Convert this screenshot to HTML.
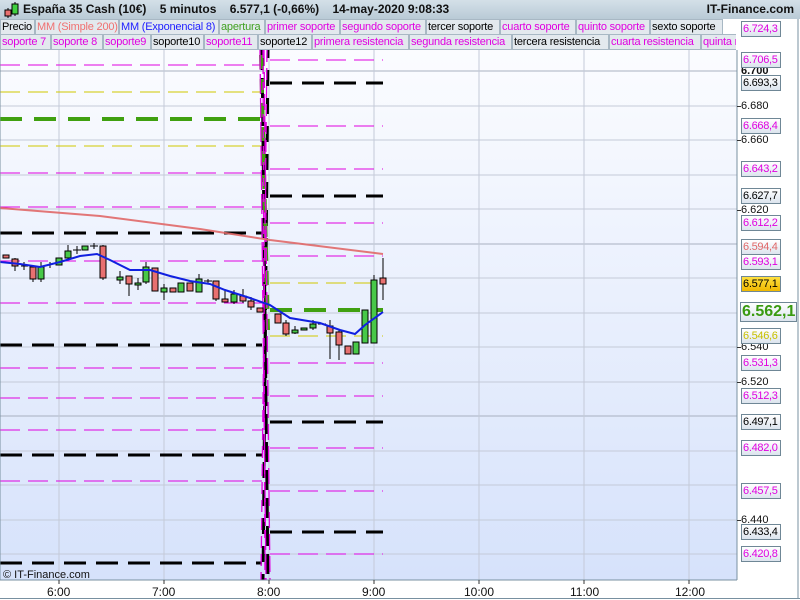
<!DOCTYPE html>
<html><head><meta charset="utf-8"><style>
*{margin:0;padding:0;box-sizing:border-box}
body{width:800px;height:600px;overflow:hidden;background:#fff;font-family:"Liberation Sans",sans-serif;position:relative}
#hdr{position:absolute;left:0;top:0;width:800px;height:19px;background:linear-gradient(#d4e0e8,#b9cad6);font-size:12px;font-weight:bold;color:#111;line-height:19px}
.row{position:absolute;left:0;height:16px;width:736px;background:#fff;overflow:hidden}
.t{position:absolute;top:0;height:16px;font-size:11px;letter-spacing:-0.2px;line-height:15px;background:#e3e9ee;border:1px solid #a8b8c4;padding-left:1px;white-space:nowrap;overflow:hidden}
.m{color:#e000e0}
.lb{position:absolute;left:741px;width:40px;height:16px;font-size:11px;letter-spacing:-0.3px;line-height:14px;border:1px solid #6f8796;background:linear-gradient(#fff,#dce4ee);padding-left:1px;white-space:nowrap;overflow:hidden}
.ax{position:absolute;left:741px;font-size:11px;line-height:12px;color:#111}
.tk{position:absolute;left:737px;width:4px;height:1px;background:#333}
.bt{position:absolute;top:585px;font-size:12px;color:#111}
</style></head><body>
<div id="hdr">
<svg width="20" height="19" style="position:absolute;left:2px;top:0"><line x1="6" y1="8" x2="6" y2="18" stroke="#000"/><rect x="3" y="10" width="6" height="6" fill="#e87070" stroke="#000"/><line x1="13" y1="2" x2="13" y2="16" stroke="#000"/><rect x="10" y="4" width="6" height="10" fill="#40d040" stroke="#000"/></svg>
<span style="position:absolute;left:23px">España 35 Cash (10€)&nbsp;&nbsp;&nbsp; 5 minutos&nbsp;&nbsp;&nbsp; 6.577,1 (-0,66%)&nbsp;&nbsp;&nbsp; 14-may-2020 9:08:33</span>
<span style="position:absolute;right:6px">IT-Finance.com</span>
</div>
<div class="row" style="top:19px">
<div class="t" style="left:0;width:35px">Precio</div>
<div class="t" style="left:35px;width:84px;color:#f07070">MM (Simple 200)</div>
<div class="t" style="left:119px;width:100px;color:#2020ff">MM (Exponencial 8)</div>
<div class="t" style="left:219px;width:46px;color:#40a020">apertura</div>
<div class="t m" style="left:265px;width:75px">primer soporte</div>
<div class="t m" style="left:340px;width:86px">segundo soporte</div>
<div class="t" style="left:426px;width:74px">tercer soporte</div>
<div class="t m" style="left:500px;width:76px">cuarto soporte</div>
<div class="t m" style="left:576px;width:74px">quinto soporte</div>
<div class="t" style="left:650px;width:73px">sexto soporte</div>
</div>
<div class="row" style="top:34px">
<div class="t m" style="left:0;width:51px">soporte 7</div>
<div class="t m" style="left:51px;width:52px">soporte 8</div>
<div class="t m" style="left:103px;width:48px">soporte9</div>
<div class="t" style="left:151px;width:53px">soporte10</div>
<div class="t m" style="left:204px;width:54px">soporte11</div>
<div class="t" style="left:258px;width:54px">soporte12</div>
<div class="t m" style="left:312px;width:97px">primera resistencia</div>
<div class="t m" style="left:409px;width:103px">segunda resistencia</div>
<div class="t" style="left:512px;width:97px">tercera resistencia</div>
<div class="t m" style="left:609px;width:92px">cuarta resistencia</div>
<div class="t m" style="left:701px;width:40px">quinta resistencia</div>
</div>
<svg width="800" height="600" style="position:absolute;left:0;top:0" >
<defs><linearGradient id="bg" x1="0" y1="0" x2="0" y2="1"><stop offset="0" stop-color="#fbfcff"/><stop offset="1" stop-color="#d6e2fb"/></linearGradient></defs>
<rect x="0" y="50" width="737" height="530" fill="url(#bg)"/>
<g stroke="#c4cad8" stroke-width="1">
<line x1="0" y1="71" x2="737" y2="71" stroke="#a8b0c0"/><line x1="0" y1="106" x2="737" y2="106"/><line x1="0" y1="140" x2="737" y2="140"/><line x1="0" y1="175" x2="737" y2="175"/><line x1="0" y1="209" x2="737" y2="209"/><line x1="0" y1="244" x2="737" y2="244" stroke="#a8b0c0"/><line x1="0" y1="278" x2="737" y2="278"/><line x1="0" y1="313" x2="737" y2="313"/><line x1="0" y1="347" x2="737" y2="347"/><line x1="0" y1="382" x2="737" y2="382"/><line x1="0" y1="416" x2="737" y2="416" stroke="#a8b0c0"/><line x1="0" y1="451" x2="737" y2="451"/><line x1="0" y1="485" x2="737" y2="485"/><line x1="0" y1="520" x2="737" y2="520"/><line x1="0" y1="554" x2="737" y2="554"/>
<line x1="59" y1="50" x2="59" y2="580"/><line x1="164" y1="50" x2="164" y2="580"/><line x1="269" y1="50" x2="269" y2="580"/><line x1="374" y1="50" x2="374" y2="580"/><line x1="479" y1="50" x2="479" y2="580"/><line x1="584" y1="50" x2="584" y2="580"/><line x1="689" y1="50" x2="689" y2="580"/>
</g>
<g fill="none" stroke-dasharray="20 8">
<g stroke="#e000e0" stroke-width="1"><line x1="0" y1="65" x2="262" y2="65"/><line x1="0" y1="173" x2="262" y2="173"/><line x1="0" y1="207" x2="262" y2="207"/><line x1="0" y1="261" x2="262" y2="261"/><line x1="0" y1="303" x2="262" y2="303"/><line x1="0" y1="368" x2="262" y2="368"/><line x1="0" y1="398" x2="262" y2="398"/><line x1="0" y1="430" x2="262" y2="430"/><line x1="0" y1="481" x2="262" y2="481"/></g>
<g stroke="#d0c800" stroke-width="1"><line x1="0" y1="92" x2="262" y2="92"/><line x1="0" y1="146" x2="262" y2="146"/></g>
</g>
<g fill="none" stroke-dasharray="22 10">
<line x1="0" y1="119" x2="262" y2="119" stroke="#40a010" stroke-width="4" stroke-dasharray="22 12"/>
<g stroke="#000" stroke-width="3"><line x1="0" y1="233" x2="262" y2="233"/><line x1="0" y1="345" x2="262" y2="345"/><line x1="0" y1="455" x2="262" y2="455"/><line x1="0" y1="563" x2="262" y2="563"/></g>
</g>
<g fill="none" stroke-dasharray="20 8">
<g stroke="#e000e0" stroke-width="1"><line x1="270" y1="60" x2="383" y2="60"/><line x1="270" y1="126" x2="383" y2="126"/><line x1="270" y1="169" x2="383" y2="169"/><line x1="270" y1="223" x2="383" y2="223"/><line x1="270" y1="256" x2="383" y2="256"/><line x1="270" y1="363" x2="383" y2="363"/><line x1="270" y1="396" x2="383" y2="396"/><line x1="270" y1="448" x2="383" y2="448"/><line x1="270" y1="491" x2="383" y2="491"/><line x1="270" y1="554" x2="383" y2="554"/></g>
<g stroke="#d0c800" stroke-width="1"><line x1="270" y1="283" x2="383" y2="283"/><line x1="270" y1="336" x2="383" y2="336"/></g>
</g>
<g fill="none" stroke-dasharray="22 10">
<line x1="270" y1="310" x2="383" y2="310" stroke="#40a010" stroke-width="4" stroke-dasharray="22 12"/>
<g stroke="#000" stroke-width="3"><line x1="270" y1="83" x2="383" y2="83"/><line x1="270" y1="196" x2="383" y2="196"/><line x1="270" y1="422" x2="383" y2="422"/><line x1="270" y1="532" x2="383" y2="532"/></g>
</g>
<line x1="262" y1="50" x2="268" y2="580" stroke="#000" stroke-width="3" stroke-dasharray="20 8"/>
<line x1="268" y1="50" x2="263" y2="580" stroke="#000" stroke-width="3" stroke-dasharray="16 12" stroke-dashoffset="8"/>
<line x1="261" y1="55" x2="268" y2="330" stroke="#40a010" stroke-width="4" stroke-dasharray="14 10"/>
<g stroke="#e000e0" stroke-width="1.3" fill="none"><line x1="260" y1="50" x2="266" y2="580" stroke-dasharray="20 4"/><line x1="264" y1="50" x2="270" y2="580" stroke-dasharray="16 6"/><line x1="267" y1="50" x2="261" y2="580" stroke-dasharray="12 6"/><line x1="263" y1="50" x2="265" y2="580" stroke-dasharray="8 8"/></g>
<polyline points="0,208 100,216 200,229 270,240 383,254" fill="none" stroke="#e06868" stroke-width="2" opacity="0.9"/>
<g stroke="#000" stroke-width="1">
<line x1="15" y1="258" x2="15" y2="271"/><line x1="24" y1="262" x2="24" y2="270"/><line x1="33" y1="265" x2="33" y2="282"/><line x1="41" y1="262" x2="41" y2="282"/><line x1="50" y1="262" x2="50" y2="268"/><line x1="68" y1="245" x2="68" y2="258"/><line x1="103" y1="245" x2="103" y2="280"/><line x1="120" y1="271" x2="120" y2="284"/><line x1="129" y1="276" x2="129" y2="296"/><line x1="138" y1="278" x2="138" y2="290"/><line x1="146" y1="262" x2="146" y2="284"/><line x1="164" y1="284" x2="164" y2="300"/><line x1="199" y1="274" x2="199" y2="292"/><line x1="208" y1="279" x2="208" y2="283"/><line x1="216" y1="281" x2="216" y2="301"/><line x1="225" y1="289" x2="225" y2="302"/><line x1="234" y1="290" x2="234" y2="304"/><line x1="243" y1="289" x2="243" y2="303"/><line x1="251" y1="297" x2="251" y2="310"/><line x1="286" y1="320" x2="286" y2="336"/><line x1="295" y1="326" x2="295" y2="334"/><line x1="313" y1="320" x2="313" y2="330"/><line x1="330" y1="320" x2="330" y2="359"/><line x1="339" y1="330" x2="339" y2="360"/><line x1="374" y1="275" x2="374" y2="328"/><line x1="383" y1="258" x2="383" y2="300"/>
<line x1="21" y1="266" x2="28" y2="266"/><line x1="73" y1="250" x2="81" y2="250"/><line x1="90" y1="246" x2="98" y2="246"/><line x1="204" y1="281" x2="212" y2="281"/><line x1="318" y1="324" x2="326" y2="324"/><line x1="77" y1="246" x2="77" y2="254"/><line x1="94" y1="243" x2="94" y2="249"/>
</g>
<g stroke="#000" stroke-width="1" fill="#e87070">
<rect x="3" y="255" width="6" height="3"/><rect x="12" y="259" width="6" height="7"/><rect x="30" y="267" width="6" height="12"/><rect x="100" y="246" width="6" height="32"/><rect x="126" y="276" width="6" height="8"/><rect x="152" y="268" width="6" height="23"/><rect x="170" y="288" width="6" height="4"/><rect x="187" y="283" width="6" height="8"/><rect x="213" y="281" width="6" height="18"/><rect x="222" y="299" width="6" height="3"/><rect x="240" y="296" width="6" height="5"/><rect x="248" y="301" width="6" height="6"/><rect x="257" y="308" width="6" height="4"/><rect x="275" y="314" width="6" height="9"/><rect x="283" y="323" width="6" height="11"/><rect x="327" y="326" width="6" height="7"/><rect x="336" y="332" width="6" height="13"/><rect x="345" y="346" width="6" height="8"/><rect x="380" y="278" width="6" height="6"/>
</g>
<g stroke="#000" stroke-width="1" fill="#48c848">
<rect x="38" y="267" width="6" height="12"/><rect x="56" y="258" width="6" height="7"/><rect x="65" y="251" width="6" height="7"/><rect x="82" y="246" width="6" height="4"/><rect x="117" y="277" width="6" height="3"/><rect x="135" y="283" width="6" height="2"/><rect x="143" y="267" width="6" height="15"/><rect x="161" y="288" width="6" height="4"/><rect x="178" y="283" width="6" height="9"/><rect x="196" y="279" width="6" height="13"/><rect x="231" y="294" width="6" height="8"/><rect x="292" y="330" width="6" height="3"/><rect x="301" y="328" width="6" height="2"/><rect x="310" y="324" width="6" height="4"/><rect x="353" y="342" width="6" height="12"/><rect x="362" y="310" width="6" height="33"/><rect x="371" y="280" width="6" height="63"/>
</g>
<polyline points="0,262 20,264 40,267 60,262 80,256 97,254 110,260 130,270 150,270 170,276 190,281 210,284 225,290 250,298 270,305 290,318 320,323 340,330 355,334 365,325 383,312" fill="none" stroke="#1020e0" stroke-width="2"/>
<line x1="737" y1="50" x2="737" y2="580" stroke="#7890a0"/>
<line x1="0" y1="580" x2="737" y2="580" stroke="#7890a0"/>
<line x1="0" y1="50" x2="0" y2="580" stroke="#7890a0"/>
<line x1="798" y1="19" x2="798" y2="599" stroke="#7890a0"/>
<line x1="0" y1="598.5" x2="800" y2="598.5" stroke="#7890a0"/>
<g stroke="#333"><line x1="59" y1="580" x2="59" y2="584"/><line x1="164" y1="580" x2="164" y2="584"/><line x1="269" y1="580" x2="269" y2="584"/><line x1="374" y1="580" x2="374" y2="584"/><line x1="479" y1="580" x2="479" y2="584"/><line x1="584" y1="580" x2="584" y2="584"/><line x1="689" y1="580" x2="689" y2="584"/></g>
<text x="3" y="578" font-family="Liberation Sans" font-size="11" fill="#111">© IT-Finance.com</text>
</svg>
<div class="bt" style="left:47px">6:00</div><div class="bt" style="left:152px">7:00</div><div class="bt" style="left:257px">8:00</div><div class="bt" style="left:362px">9:00</div><div class="bt" style="left:464px">10:00</div><div class="bt" style="left:570px">11:00</div><div class="bt" style="left:675px">12:00</div>
<div class="ax" style="top:65px;font-weight:bold">6.700</div>
<div class="tk" style="top:106px"></div><div class="ax" style="top:100px">6.680</div>
<div class="tk" style="top:140px"></div><div class="ax" style="top:134px">6.660</div>
<div class="tk" style="top:210px"></div><div class="ax" style="top:204px">6.620</div>
<div class="tk" style="top:347px"></div><div class="ax" style="top:341px">6.540</div>
<div class="tk" style="top:382px"></div><div class="ax" style="top:376px">6.520</div>
<div class="tk" style="top:520px"></div><div class="ax" style="top:514px">6.440</div>
<div class="lb m" style="top:21px;left:741px">6.724,3</div>
<div class="lb m" style="top:52px">6.706,5</div>
<div class="lb" style="top:75px">6.693,3</div>
<div class="lb m" style="top:118px">6.668,4</div>
<div class="lb m" style="top:161px">6.643,2</div>
<div class="lb" style="top:188px">6.627,7</div>
<div class="lb m" style="top:215px">6.612,2</div>
<div class="lb" style="top:239px;color:#e06868">6.594,4</div>
<div class="lb m" style="top:254px">6.593,1</div>
<div class="lb" style="top:276px;background:linear-gradient(#ffe040,#f0b800)">6.577,1</div>
<div class="lb" style="top:302px;left:740px;width:57px;height:20px;font-size:16px;letter-spacing:0;line-height:18px;font-weight:bold;color:#3a9a10">6.562,1</div>
<div class="lb" style="top:328px;color:#c8c000">6.546,6</div>
<div class="lb m" style="top:355px">6.531,3</div>
<div class="lb m" style="top:388px">6.512,3</div>
<div class="lb" style="top:414px">6.497,1</div>
<div class="lb m" style="top:440px">6.482,0</div>
<div class="lb m" style="top:483px">6.457,5</div>
<div class="lb" style="top:524px">6.433,4</div>
<div class="lb m" style="top:546px">6.420,8</div>
</body></html>
